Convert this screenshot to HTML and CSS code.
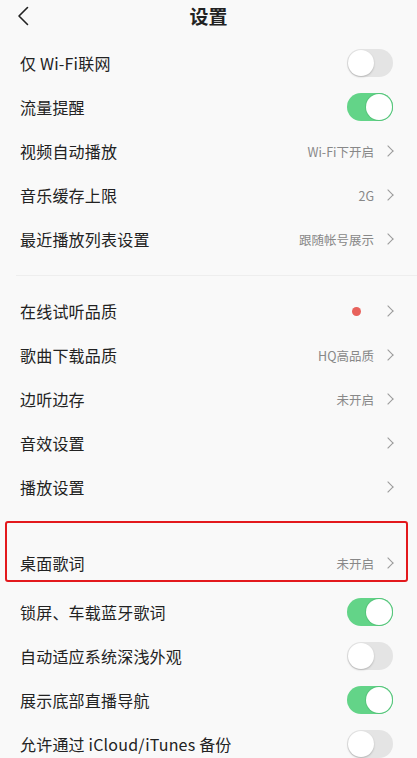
FILE: index.html
```html
<!DOCTYPE html>
<html lang="zh-CN">
<head>
<meta charset="utf-8">
<title>设置</title>
<link rel="stylesheet" href="styles.css">
</head>
<body>
<div class="page">
  <header class="topbar">
    <svg class="back" width="12" height="20" viewBox="0 0 12 20"><path d="M10.5 1.5 L2 10 L10.5 18.5" fill="none" stroke="#222" stroke-width="1.6" stroke-linecap="round" stroke-linejoin="round"/></svg>
    <h1 class="title">设置</h1>
  </header>

  <section class="group first">
    <div class="row"><span class="label">仅 Wi-Fi联网</span><span class="toggle"></span></div>
    <div class="row"><span class="label">流量提醒</span><span class="toggle on"></span></div>
    <div class="row"><span class="label">视频自动播放</span><span class="right"><span class="value">Wi-Fi下开启</span><span class="chev"></span></span></div>
    <div class="row"><span class="label">音乐缓存上限</span><span class="right"><span class="value">2G</span><span class="chev"></span></span></div>
    <div class="row"><span class="label">最近播放列表设置</span><span class="right"><span class="value">跟随帐号展示</span><span class="chev"></span></span></div>
  </section>

  <div class="divider"></div>

  <section class="group">
    <div class="row"><span class="label">在线试听品质</span><span class="right"><span class="dot"></span><span class="chev"></span></span></div>
    <div class="row"><span class="label">歌曲下载品质</span><span class="right"><span class="value">HQ高品质</span><span class="chev"></span></span></div>
    <div class="row"><span class="label">边听边存</span><span class="right"><span class="value">未开启</span><span class="chev"></span></span></div>
    <div class="row"><span class="label">音效设置</span><span class="right"><span class="chev"></span></span></div>
    <div class="row"><span class="label">播放设置</span><span class="right"><span class="chev"></span></span></div>
  </section>

  <section class="group highlighted">
    <div class="highlight-box"></div>
    <div class="row"><span class="label">桌面歌词</span><span class="right"><span class="value">未开启</span><span class="chev"></span></span></div>
  </section>

  <section class="group after">
    <div class="row"><span class="label">锁屏、车载蓝牙歌词</span><span class="toggle on"></span></div>
    <div class="row"><span class="label">自动适应系统深浅外观</span><span class="toggle"></span></div>
    <div class="row"><span class="label">展示底部直播导航</span><span class="toggle on"></span></div>
    <div class="row"><span class="label">允许通过 iCloud/iTunes 备份</span><span class="toggle"></span></div>
  </section>
</div>
</body>
</html>
```

FILE: styles.css
```css
* { box-sizing: border-box; }
html, body {
  margin: 0;
  padding: 0;
  background: #f9f9f9;
}
body {
  font-family: "Noto Sans CJK SC", "Noto Sans", sans-serif;
  color: #222;
  overflow: hidden;
}
.page {
  width: 417px;
  height: 758px;
  overflow: hidden;
}
.topbar {
  height: 32px;
  display: flex;
  align-items: center;
  justify-content: center;
  position: relative;
}
.back {
  position: absolute;
  left: 17px;
  top: 6px;
}
.title {
  margin: 0;
  font-size: 19px;
  font-weight: 700;
  color: #222;
  line-height: 1;
  margin-top: -2px;
}
.group.first {
  padding-top: 9px;
}
.group.after {
  padding-top: 5px;
}
.row {
  height: 44px;
  display: flex;
  align-items: center;
  justify-content: space-between;
  padding: 0 22px 0 20px;
}
.label {
  font-size: 16px;
  color: #222;
  letter-spacing: 0.2px;
}
.right {
  display: flex;
  align-items: center;
}
.value {
  font-size: 12.5px;
  color: #888;
  margin-right: 10px;
}
.chev {
  width: 8px;
  height: 8px;
  border-top: 1.5px solid #9a9a9a;
  border-right: 1.5px solid #9a9a9a;
  transform: rotate(45deg);
  margin-right: 3px;
}
.dot {
  width: 9px;
  height: 9px;
  border-radius: 50%;
  background: #e8625c;
  margin-right: 23px;
}
.toggle {
  width: 46px;
  height: 28px;
  border-radius: 14px;
  background: #e4e4e4;
  position: relative;
  margin-right: 2px;
}
.toggle::after {
  content: "";
  position: absolute;
  top: 1px;
  left: 1px;
  width: 26px;
  height: 26px;
  border-radius: 50%;
  background: #fff;
  box-shadow: 0 1px 2px rgba(0,0,0,0.22);
}
.toggle.on {
  background: #63d488;
}
.toggle.on::after {
  left: 19px;
  box-shadow: 0 0 0 1px #56c57b;
}
.divider {
  height: 1px;
  background: #eeeeee;
  margin: 14px 0 13px 16px;
}
.highlighted {
  position: relative;
  padding-top: 32px;
}
.highlight-box {
  position: absolute;
  left: 5px;
  top: 12px;
  width: 403px;
  height: 61px;
  border: 2px solid #e3191d;
  border-radius: 3px;
  pointer-events: none;
}
```
